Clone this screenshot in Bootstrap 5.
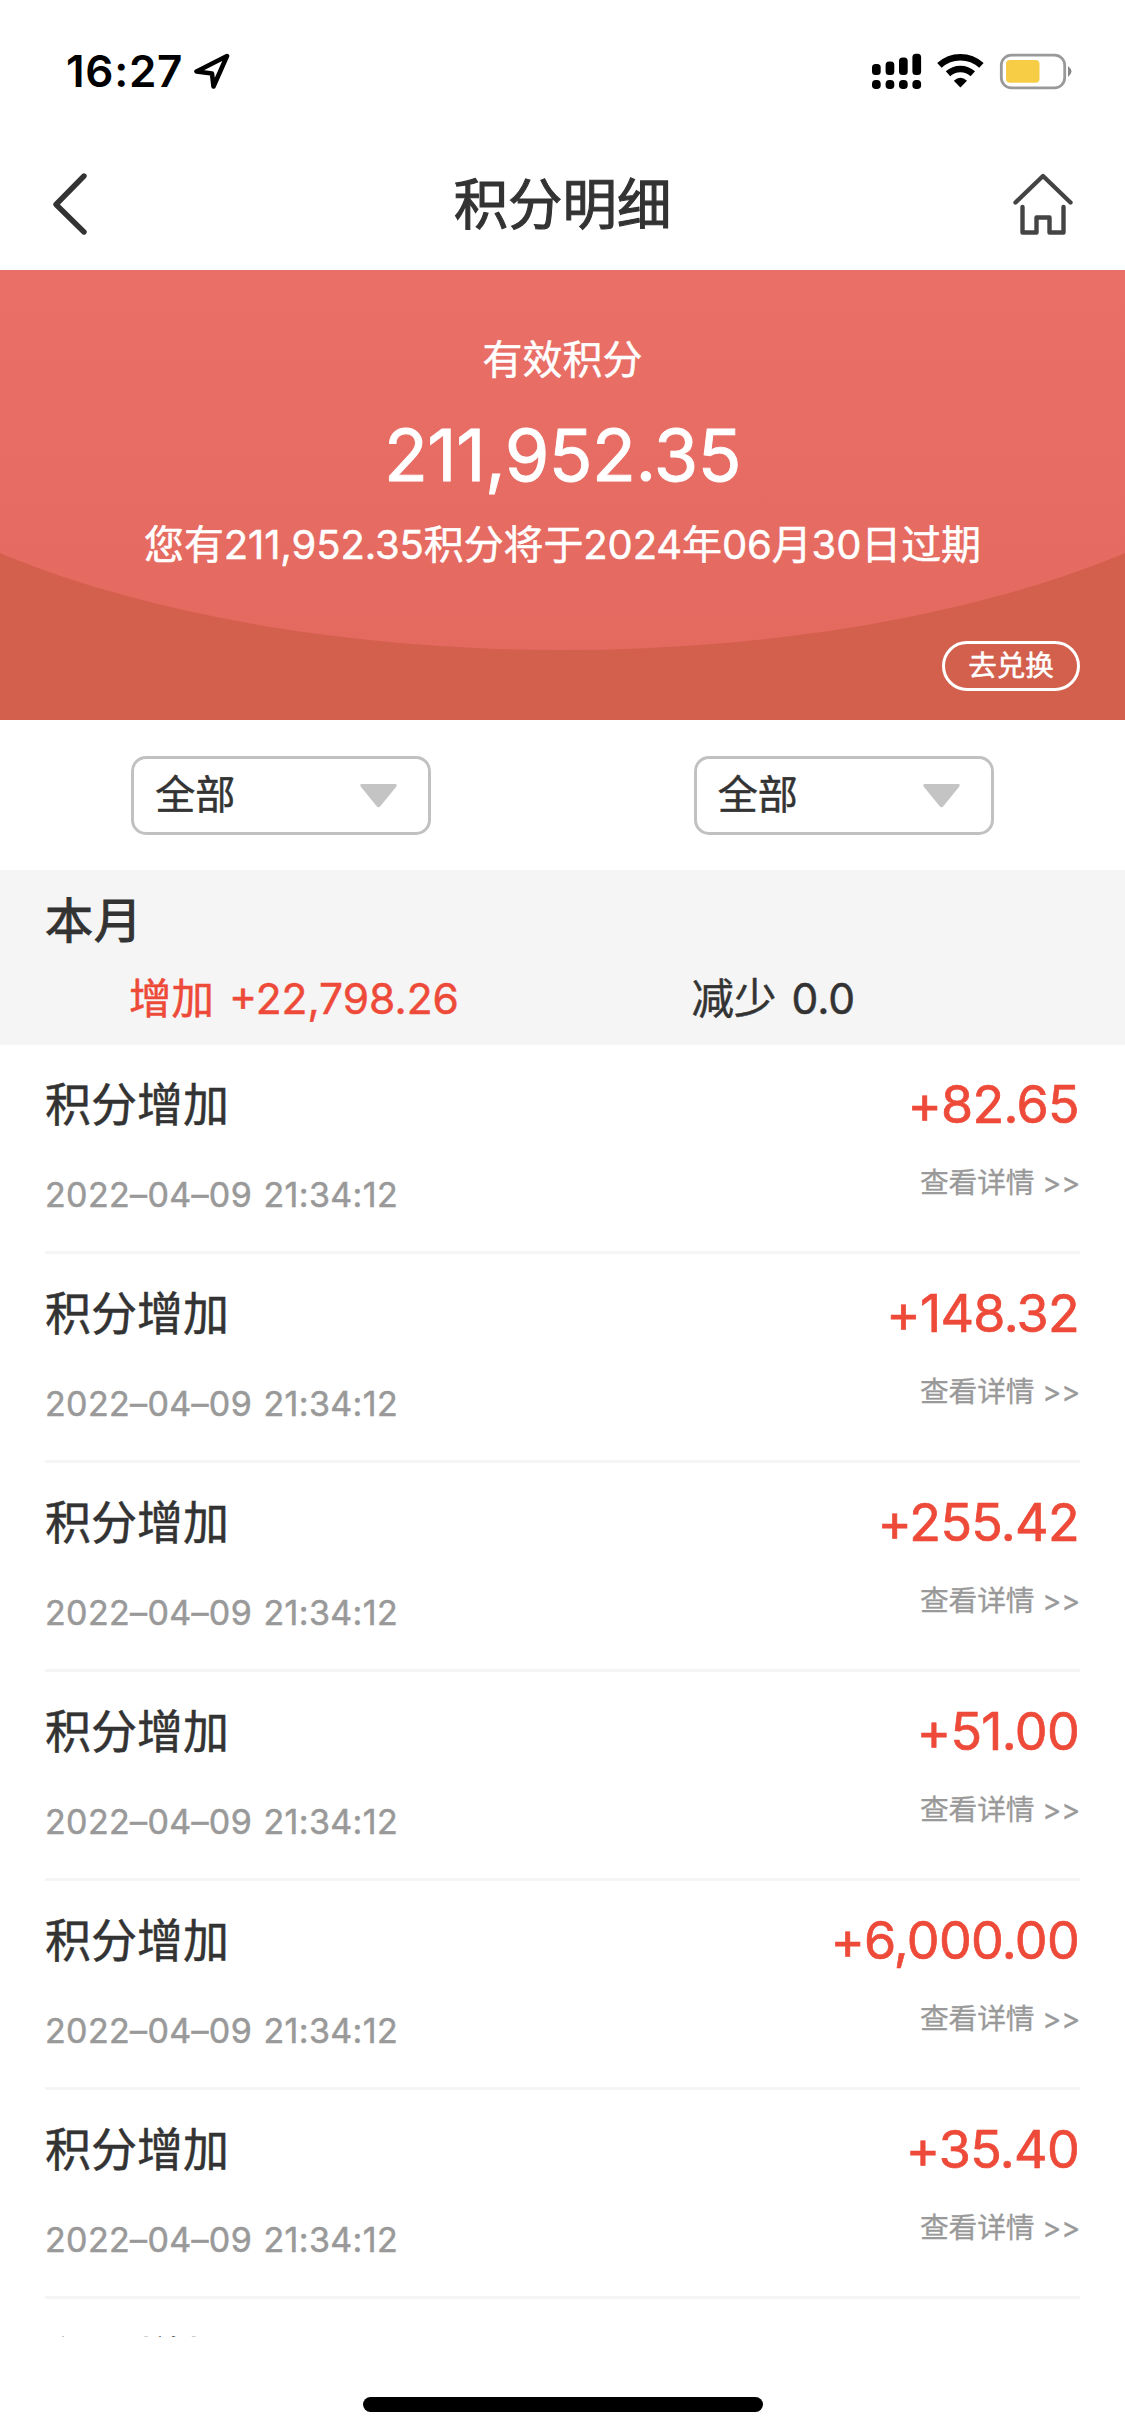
<!DOCTYPE html>
<html lang="zh-CN">
<head>
<meta charset="utf-8">
<meta name="viewport" content="width=device-width, initial-scale=1">
<title>积分明细</title>
<link href="https://cdn.jsdelivr.net/npm/bootstrap@5.3.0/dist/css/bootstrap.min.css" rel="stylesheet">
<style>
body{font-family:Inter,"Noto Sans CJK SC",sans-serif;color:#333;background:#fff;width:1125px;height:2435px;overflow:hidden;-webkit-text-stroke:.5px currentColor}
svg{display:block;flex:none}
.status-bar{height:150px;padding:41px 53px 0 66px}
.clock{font-size:44px;font-weight:600;line-height:60px;letter-spacing:.7px;color:#000;width:128px;-webkit-text-stroke:0}
.title-bar{height:120px;padding:0 52px 8px;border-bottom:5px solid #fafdfd}
.title-bar h1{font-size:54.4px;font-weight:400;line-height:70px;-webkit-text-stroke:1.1px currentColor}
.hero{height:450px;background:#d35f4d;overflow:hidden}
.hero::before{content:"";position:absolute;left:-20%;width:140%;top:-266px;height:646px;border-radius:50%;background:linear-gradient(#ea6f67 41%,#e4695f)}
.hero-label{font-size:40px;line-height:60px;padding-top:60px}
.hero-total{font-size:72px;line-height:80px;margin-top:25px;letter-spacing:-.5px;-webkit-text-stroke:.9px currentColor}
.hero-note{font-size:40px;line-height:60px;margin-top:20px;letter-spacing:-.12px}
.redeem{right:45px;bottom:29px;width:138px;height:50px;border:3px solid #fff;font-size:28.5px;line-height:1;z-index:1}
.filters{height:150px}
.picker{width:300px;height:79px;border:3px solid #c1c1c1;border-radius:15px;font-size:40px;padding:0 31px 0 21px;background:#fff;color:#333;-webkit-text-stroke:.5px currentColor}
.picker svg{margin-top:2px}
.month{height:175px;background:#f5f5f5}
.month h2{font-size:48px;line-height:60px;font-weight:400;padding:21px 45px 0;letter-spacing:1px;-webkit-text-stroke:1.1px currentColor}
.sums{font-size:42.5px;line-height:60px;margin-top:18px;word-spacing:3px}
.sums .col-6{padding-left:129px}
.red{color:#ee4a39}
.records{height:1292px;overflow:hidden;padding:0 45px}
.record{height:209px;border-bottom:3px solid #f5f5f5;padding-top:30px}
.r-title{font-size:46px;line-height:60px;margin-top:-1.5px}
.r-date{font-size:34px;line-height:50px;margin-top:36px;color:#999;letter-spacing:.35px}
.r-date span{margin-left:1.500px}
.r-amt{font-size:52px;line-height:60px;letter-spacing:-.7px;padding-right:1px;-webkit-text-stroke:.7px currentColor}
.r-more{font-size:28.8px;line-height:40px;margin-top:28px;color:#999;letter-spacing:-.2px;-webkit-text-stroke:.3px currentColor}
.home-pill{width:400px;height:15px;background:#000;margin:60px auto 0}
</style>
</head>
<body>
<div class="status-bar d-flex align-items-start">
  <div class="clock">16:27</div>
  <svg class="mt-2 me-auto" width="38" height="40" viewBox="0 0 38 40"><path d="M33 7 2.500 22.500 18 24.500 19.500 37.500Z" fill="none" stroke="#000" stroke-width="4.600" stroke-linejoin="round"/></svg>
  <svg width="200" height="50" viewBox="0 0 200 50">
    <g><rect x="0" y="23" width="8.700" height="11" rx="3.500"/><rect x="13.600" y="20.500" width="8.700" height="13.500" rx="3.500"/><rect x="27" y="16.500" width="8.700" height="17.500" rx="3.500"/><rect x="40.400" y="12.700" width="8.700" height="21.300" rx="3.500"/>
    <rect x="0" y="39" width="8.700" height="9" rx="3.800"/><rect x="13.600" y="39" width="8.700" height="9" rx="3.800"/><rect x="27" y="39" width="8.700" height="9" rx="3.800"/><rect x="40.400" y="39" width="8.700" height="9" rx="3.800"/></g>
    <g fill="none" stroke="#000" stroke-width="6.600"><path d="M67.400 24.400A31 31 0 0 1 109.400 24.400"/><path d="M76 32.800A18.500 18.500 0 0 1 100.800 32.800"/></g>
    <path d="M88.400 46.500 81.800 39.700Q88.400 34 95 39.700Z"/>
    <rect x="129.300" y="14.200" width="63.400" height="32.600" rx="10" fill="#fff" stroke="#999" stroke-width="2.800"/>
    <rect x="134" y="19" width="33.500" height="22.800" rx="4" fill="#f7cd45"/>
    <path d="M196 25Q203 30.500 196 36Z" fill="#888"/>
  </svg>
</div>
<header class="title-bar d-flex justify-content-between align-items-center">
  <svg width="60" height="64" viewBox="0 0 60 64"><path d="M32 4 4 32.500 32 60" fill="none" stroke="#333" stroke-width="5.400" stroke-linecap="round" stroke-linejoin="round"/></svg>
  <h1 class="m-0">积分明细</h1>
  <svg width="60" height="64" viewBox="0 0 60 64"><g fill="none" stroke="#444" stroke-width="4.400" stroke-linejoin="round" stroke-linecap="round"><path d="M2.500 30.500 30 4 57.500 30.500"/><path d="M9.500 35V60.500H23.500V45.500H36.500V60.500H50.500V35"/></g></svg>
</header>
<section class="hero position-relative text-white text-center">
  <div class="position-relative">
    <div class="hero-label">有效积分</div>
    <div class="hero-total">211,952.35</div>
    <div class="hero-note">您有211,952.35积分将于2024年06月30日过期</div>
  </div>
  <a class="redeem position-absolute rounded-pill d-flex align-items-center justify-content-center text-white text-decoration-none" href="#">去兑换</a>
</section>
<div class="filters row g-0 align-items-center">
  <div class="col-6 d-flex justify-content-center"><button class="picker d-flex justify-content-between align-items-center">全部<svg width="37" height="24" viewBox="0 0 37 24"><path d="M2 0H35Q38 0 36 3L20.500 22Q18.500 24.500 16.500 22L1 3Q-1 0 2 0Z" fill="#c4c4c4"/></svg></button></div>
  <div class="col-6 d-flex justify-content-center"><button class="picker d-flex justify-content-between align-items-center">全部<svg width="37" height="24" viewBox="0 0 37 24"><path d="M2 0H35Q38 0 36 3L20.500 22Q18.500 24.500 16.500 22L1 3Q-1 0 2 0Z" fill="#c4c4c4"/></svg></button></div>
</div>
<section class="month">
  <h2 class="m-0">本月</h2>
  <div class="sums row g-0"><div class="col-6 red">增加 +22,798.26</div><div class="col-6">减少 0.0</div></div>
</section>
<main class="records">
  <div class="record d-flex justify-content-between"><div><div class="r-title">积分增加</div><div class="r-date">2022–04–09 <span>21:34:12</span></div></div><div class="text-end"><div class="r-amt red">+82.65</div><div class="r-more">查看详情 &gt;&gt;</div></div></div>
  <div class="record d-flex justify-content-between"><div><div class="r-title">积分增加</div><div class="r-date">2022–04–09 <span>21:34:12</span></div></div><div class="text-end"><div class="r-amt red">+148.32</div><div class="r-more">查看详情 &gt;&gt;</div></div></div>
  <div class="record d-flex justify-content-between"><div><div class="r-title">积分增加</div><div class="r-date">2022–04–09 <span>21:34:12</span></div></div><div class="text-end"><div class="r-amt red">+255.42</div><div class="r-more">查看详情 &gt;&gt;</div></div></div>
  <div class="record d-flex justify-content-between"><div><div class="r-title">积分增加</div><div class="r-date">2022–04–09 <span>21:34:12</span></div></div><div class="text-end"><div class="r-amt red">+51.00</div><div class="r-more">查看详情 &gt;&gt;</div></div></div>
  <div class="record d-flex justify-content-between"><div><div class="r-title">积分增加</div><div class="r-date">2022–04–09 <span>21:34:12</span></div></div><div class="text-end"><div class="r-amt red">+6,000.00</div><div class="r-more">查看详情 &gt;&gt;</div></div></div>
  <div class="record d-flex justify-content-between"><div><div class="r-title">积分增加</div><div class="r-date">2022–04–09 <span>21:34:12</span></div></div><div class="text-end"><div class="r-amt red">+35.40</div><div class="r-more">查看详情 &gt;&gt;</div></div></div>
  <div class="record d-flex justify-content-between"><div><div class="r-title">积分增加</div></div></div>
</main>
<div class="home-pill rounded-pill"></div>
<script src="https://cdn.jsdelivr.net/npm/bootstrap@5.3.0/dist/js/bootstrap.bundle.min.js"></script>
</body>
</html>
